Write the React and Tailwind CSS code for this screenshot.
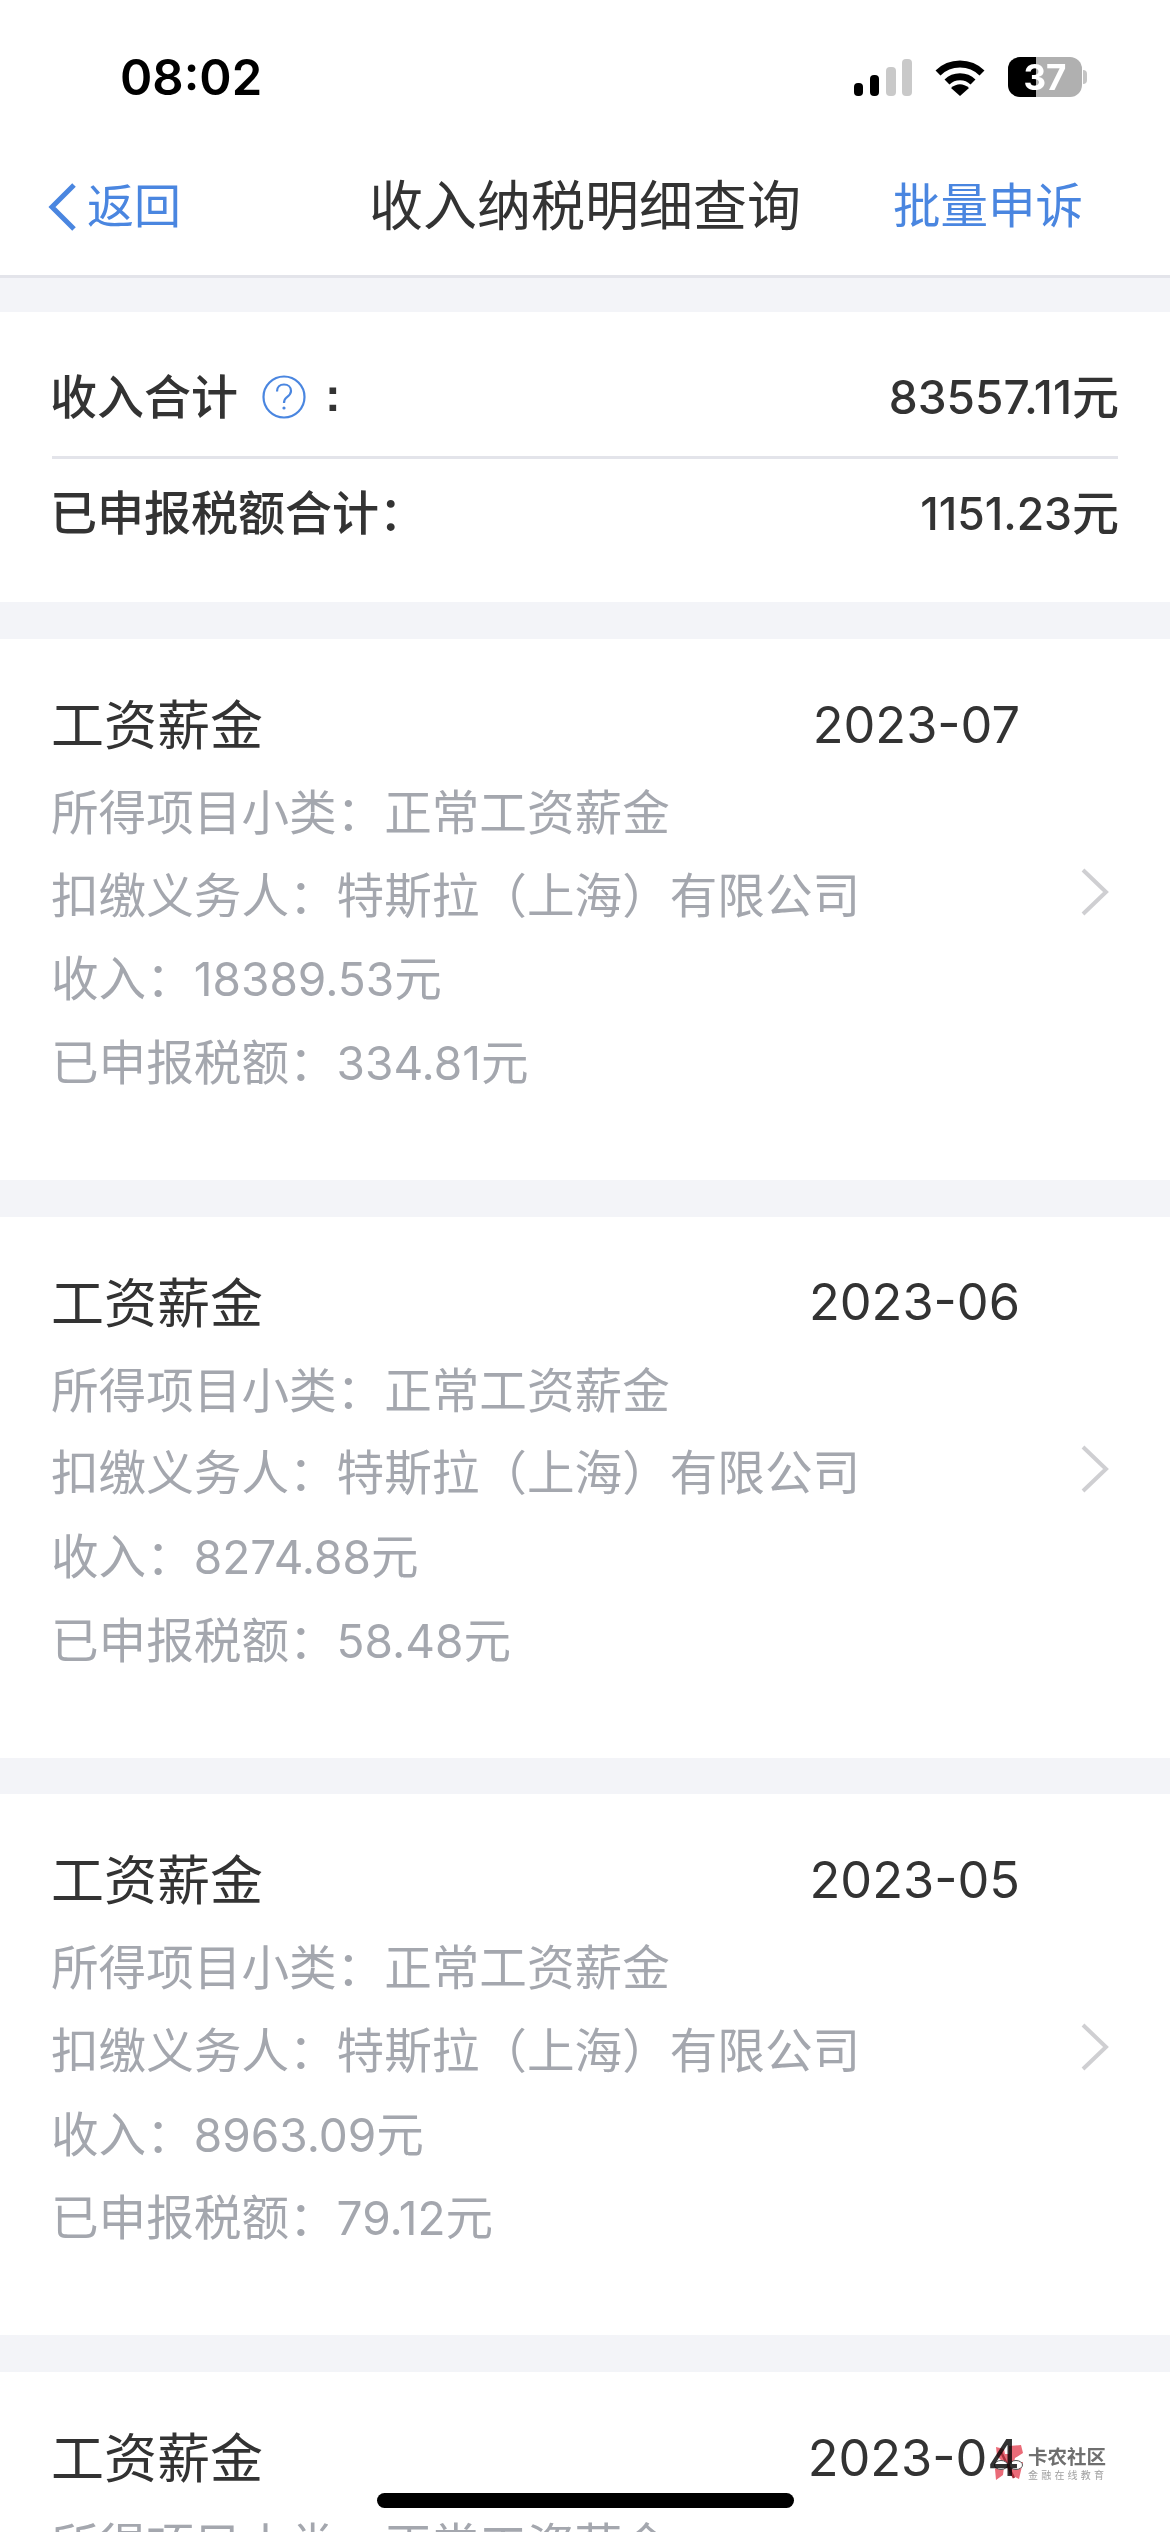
const cjk = "font-['Liberation_Sans','Noto_Sans_CJK_SC',sans-serif]";
const num = "font-['Inter','Noto_Sans_CJK_SC',sans-serif]";

function Signal() {
  return (
    <svg width="58" height="37" viewBox="0 0 58 37" className="block">
      <rect x="0" y="24" width="9" height="13" rx="4" fill="#000" />
      <rect x="16" y="16" width="9" height="21" rx="4" fill="#000" />
      <rect x="32" y="8" width="10" height="29" rx="4" fill="#c9c9c9" />
      <rect x="48" y="0" width="10" height="37" rx="4" fill="#c9c9c9" />
    </svg>
  );
}

function Wifi() {
  return (
    <svg width="50" height="37" viewBox="0 0 50 37" className="block" fill="none" stroke="#000" strokeWidth="7">
      <path d="M3 14 C15 2 35 2 47 14" />
      <path d="M12 23 C19 16 31 16 38 23" />
      <path d="M16 29 L25 37 L34 29 C28 24 22 24 16 29 Z" fill="#000" stroke="none" />
    </svg>
  );
}

function Battery() {
  return (
    <div className="flex items-center">
      <div className={`relative w-[74px] h-[40px] rounded-[12px] overflow-hidden bg-[#b0b0b0]`}>
        <div className="absolute left-0 top-0 bottom-0 w-[28px] bg-black" />
        <div className={`absolute inset-0 flex items-center justify-center text-white font-bold text-[35px] leading-none ${num}`}>37</div>
      </div>
      <div className="w-[4px] h-[14px] ml-[1px] rounded-r-full bg-[#c4c4c4]" />
    </div>
  );
}

function BackChevron() {
  return (
    <svg width="29" height="50" viewBox="0 0 29 50" fill="none" stroke="#4a86e0" strokeWidth="5" className="block">
      <path d="M26 3 L4 25 L26 47" />
    </svg>
  );
}

function RowChevron() {
  return (
    <svg width="30" height="50" viewBox="0 0 30 50" fill="none" stroke="#cfcfd2" strokeWidth="4" className="block ml-auto mb-[82px]">
      <path d="M3 3 L26 25 L3 47" />
    </svg>
  );
}

function Help() {
  return (
    <svg width="44" height="44" viewBox="0 0 44 44" fill="none" className="block">
      <circle cx="22" cy="22" r="20.5" stroke="#4a86e0" strokeWidth="2.2" />
      <path d="M15 16.5 C15 12 18 9.5 22 9.5 C26 9.5 29 12 29 16 C29 19.5 26.5 21 24.5 22.5 C23 23.7 22 25 22 28" stroke="#4a86e0" strokeWidth="2.2" />
      <circle cx="22" cy="33" r="1.6" fill="#4a86e0" />
    </svg>
  );
}

function Amount({ value, className }) {
  return (
    <>
      <span className={`${num} ${className}`}>{value}</span>
      <span>元</span>
    </>
  );
}

function Card({ date, income, tax, partial }) {
  return (
    <section className="bg-white h-[541px] mb-[36.6px] pl-[51px] pr-[60px] pt-[46px] flex items-center shrink-0">
      <div className="w-[969px] self-start">
        <div className="h-[83px] flex items-center justify-between">
          <span className="text-[53px] text-[#333333] leading-none">工资薪金</span>
          <span className={`${num} text-[50.5px] text-[#333333] leading-none -mt-[3px]`}>{date}</span>
        </div>
        <div className="text-[47.6px] text-[#a4a7ae] leading-[82.7px] pt-[5px]">
          <div>所得项目小类：正常工资薪金</div>
          {!partial && (
            <>
              <div>扣缴义务人：特斯拉（上海）有限公司</div>
              <div>收入：<Amount value={income} className="text-[46px]" /></div>
              <div>已申报税额：<Amount value={tax} className="text-[46px]" /></div>
            </>
          )}
        </div>
      </div>
      {!partial && <RowChevron />}
    </section>
  );
}

function Logo() {
  return (
    <svg width="30" height="36" viewBox="0 0 30 36" className="block mix-blend-multiply">
      <path d="M2 2 L10 4 L11 9 L15 9 L15 1 L27 0 L29 8 L21 13 L20 17 L29 17 L25 34 L15 29 L14 22 L10 22 L9 30 L2 35 L1 24 L8 16 L3 11 Z" fill="#ea6b78" />
      <path d="M7 7 L20 33" stroke="#a8303c" strokeWidth="2.5" />
      <ellipse cx="7" cy="20" rx="6.5" ry="4.5" fill="#ffffff" stroke="#555555" strokeWidth="1" />
      <ellipse cx="22" cy="20" rx="6.5" ry="4.5" fill="#ffffff" stroke="#555555" strokeWidth="1" />
    </svg>
  );
}

export default function App() {
  return (
    <div className={`relative w-[1170px] h-[2532px] overflow-hidden bg-[#f3f4f8] ${cjk}`}>
      <header className="bg-white border-b-[3px] border-[#e3e4ea] h-[278px] flex flex-col">
        <div className="h-[156px] flex items-start justify-between pl-[120px] pr-[83px] pt-[53px]">
          <span className={`${num} text-[49px] font-semibold text-black leading-[50px]`}>08:02</span>
          <div className="flex items-center gap-[23px] pt-[4px]">
            <Signal />
            <Wifi />
            <Battery />
          </div>
        </div>
        <div className="relative flex items-center justify-between pl-[48px] pr-[87px] h-[98px] pt-[3px]">
          <div className="flex items-center gap-[10px] text-[47px] text-[#4a86e0] leading-none">
            <BackChevron />
            <span>返回</span>
          </div>
          <h1 className="absolute left-[369px] text-[54px] font-normal text-[#333333] leading-none">收入纳税明细查询</h1>
          <span className="text-[47.5px] text-[#4a86e0] leading-none">批量申诉</span>
        </div>
      </header>
      <main className="pt-[34px] flex flex-col">
        <section className="bg-white h-[290px] mb-[37px] pl-[50px] pr-[52px] text-[47px] font-medium text-[#333333] leading-none flex flex-col shrink-0">
          <div className="h-[147px] flex items-center justify-between border-b-[3px] border-[#e3e4ea] pt-[26px] ml-[2px]">
            <span className="flex items-center -ml-[2px]">
              收入合计
              <span className="ml-[24px] mr-[19px]"><Help /></span>
              <span className="font-bold -mt-[6px]">:</span>
            </span>
            <span className="-mr-[1px]"><Amount value="83557.11" className="text-[46px]" /></span>
          </div>
          <div className="h-[108px] flex items-center justify-between">
            <span>已申报税额合计：</span>
            <span className="-mr-[1px]"><Amount value="1151.23" className="text-[44.5px]" /></span>
          </div>
        </section>
        <Card date="2023-07" income="18389.53" tax="334.81" />
        <Card date="2023-06" income="8274.88" tax="58.48" />
        <Card date="2023-05" income="8963.09" tax="79.12" />
        <Card date="2023-04" partial />
      </main>
      <div className="absolute left-[994px] top-[2445px] flex items-start gap-[4px]">
        <Logo />
        <div className="flex flex-col items-start">
          <span className="text-[19.5px] font-bold leading-[24px] text-[#6f6f6f]">卡农社区</span>
          <span className="text-[10px] leading-[14px] text-[#a0a0a0] tracking-[3.2px]">金融在线教育</span>
        </div>
      </div>
      <div className="absolute left-[377px] top-[2493px] w-[417px] h-[15px] rounded-full bg-black" />
    </div>
  );
}
